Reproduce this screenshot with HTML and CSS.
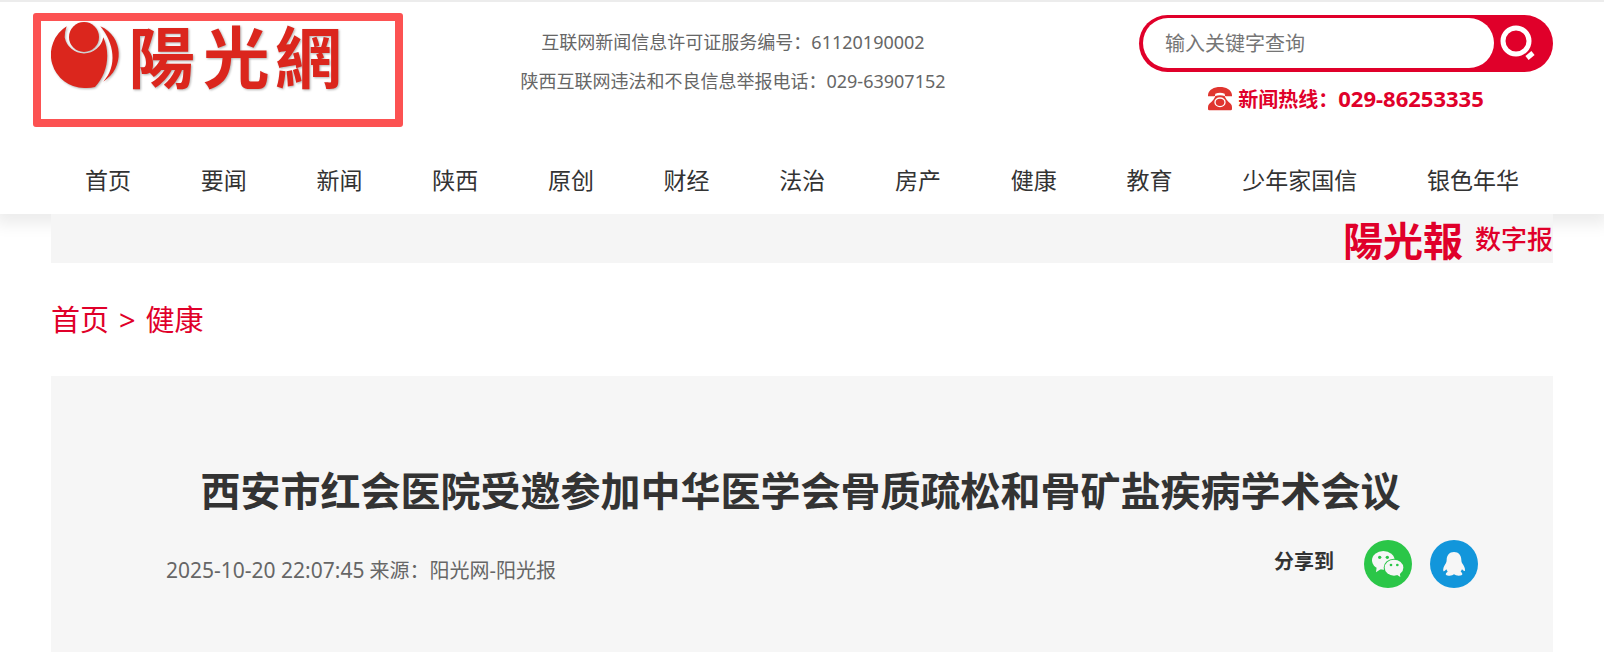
FILE: index.html
```
<!DOCTYPE html>
<html lang="zh-CN">

<head>
    <meta charset="UTF-8">
    <meta name="viewport" content="width=device-width, initial-scale=1">
    <title>西安市红会医院受邀参加中华医学会骨质疏松和骨矿盐疾病学术会议</title>
    <link rel="stylesheet" href="styles.css">
</head>

<body>
    <header class="header">
        <div class="container">
            <div class="header-top">
                <div class="logo">
                    <a href="#" aria-label="阳光网">
                        <svg class="logo-img" viewBox="0 -33 900 360" fill="#db261d">
                            <circle cx="99" cy="72" r="45" />
                            <path d="M47 40 A100 100 0 0 0 100 225 Q118 226 132 222 C168 184 180 124 157 73 A59 59 0 0 1 41 73 Q41 56 47 40 Z" />
                            <path d="M148 40 C218 70 222 166 157 206 C200 160 190 90 148 40 Z" />
                            <g class="logo-text">
                                <text x="232" y="210">陽</text>
                                <text x="456" y="210">光</text>
                                <text x="672" y="210">網</text>
                            </g>
                        </svg>
                    </a>
                    <div class="logo-frame"></div>
                </div>
                <div class="info">
                    <p>互联网新闻信息许可证服务编号：61120190002</p>
                    <p>陕西互联网违法和不良信息举报电话：029-63907152</p>
                </div>
                <div class="search">
                    <form class="search-form">
                        <input class="search-input" type="text" placeholder="输入关键字查询" aria-label="输入关键字查询">
                        <button class="search-btn" type="button" aria-label="搜索">
                            <svg width="36" height="36" viewBox="0 0 36 36" fill="none" stroke="#fff">
                                <circle cx="16" cy="16" r="13" stroke-width="5" />
                                <path d="M27 33 L33 28" stroke-width="5" />
                            </svg>
                        </button>
                    </form>
                    <p class="hotline">
                        <svg width="24" height="24" viewBox="0 0 72 72" fill="#e0352f">
                            <path d="M0 28 C-3 -9 75 -9 72 28 H54 Q50 28 50 20 Q36 15 22 20 Q22 28 18 28 Z" />
                            <path fill-rule="evenodd" d="M22 27 Q36 22 50 27 Q53 38 68 50 Q72 54 72 60 V66 Q72 70 68 70 H4 Q0 70 0 66 V60 Q0 54 4 50 Q19 38 22 27 Z M36 31 A17 15 0 1 0 36 61 A17 15 0 1 0 36 31 Z M36 35 A13 11 0 1 1 36 57 A13 11 0 1 1 36 35 Z" />
                        </svg>
                        <span>新闻热线：<span class="hotline-num">029-86253335</span></span>
                    </p>
                </div>
            </div>
            <nav class="nav">
                <a href="#">首页</a>
                <a href="#">要闻</a>
                <a href="#">新闻</a>
                <a href="#">陕西</a>
                <a href="#">原创</a>
                <a href="#">财经</a>
                <a href="#">法治</a>
                <a href="#">房产</a>
                <a href="#">健康</a>
                <a href="#">教育</a>
                <a href="#">少年家国信</a>
                <a href="#">银色年华</a>
            </nav>
        </div>
    </header>
    <main class="container">
        <div class="banner">
            <a class="paper" href="#">
                <span class="paper-name">陽光報</span>
                <span class="paper-type">数字报</span>
            </a>
        </div>
        <div class="crumb">
            <a href="#">首页</a>
            <span>&gt;</span>
            <a href="#">健康</a>
        </div>
        <article class="article">
            <h1 class="title">西安市红会医院受邀参加中华医学会骨质疏松和骨矿盐疾病学术会议</h1>
            <div class="meta">
                <p class="source"><span class="time">2025-10-20 22:07:45</span> 来源：阳光网-阳光报</p>
                <div class="share">
                    <span class="share-label">分享到</span>
                    <button class="share-btn" type="button" aria-label="微信">
                        <svg viewBox="0 0 144 144">
                            <circle cx="72" cy="72" r="72" fill="#2bc648" />
                            <path d="M38 82 L36 97 L52 86 Z" fill="#f6f6f6" />
                            <ellipse cx="58" cy="61" rx="34" ry="28" fill="#f6f6f6" />
                            <circle cx="47" cy="52" r="5" fill="#2bc648" />
                            <circle cx="70" cy="52" r="5" fill="#2bc648" />
                            <ellipse cx="90" cy="83" rx="31" ry="27" fill="#2bc648" />
                            <ellipse cx="90" cy="83" rx="28" ry="24" fill="#f6f6f6" />
                            <path d="M96 103 L109 111 L107 97 Z" fill="#f6f6f6" />
                            <circle cx="81" cy="75" r="4" fill="#2bc648" />
                            <circle cx="100" cy="75" r="4" fill="#2bc648" />
                        </svg>
                    </button>
                    <button class="share-btn" type="button" aria-label="QQ">
                        <svg viewBox="0 0 144 144">
                            <circle cx="72" cy="72" r="72" fill="#1296db" />
                            <path d="M72 36 C58 36 50 46 50 60 Q50 65 48 69 C42 78 38 86 40 93 Q42 96 49 88 Q51 92 53 95 Q47 98 47 103 Q48 108 59 107 Q68 107 72 103 Q77 107 86 107 Q97 107 97 102 Q97 98 92 95 Q94 92 96 88 Q103 96 105 92 C106 85 102 77 96 69 Q94 65 94 60 C94 46 86 36 72 36 Z" fill="#f6f6f6" />
                        </svg>
                    </button>
                </div>
            </div>
        </article>
    </main>
</body>

</html>
```
FILE: styles.css
```
* {
    box-sizing: border-box;
    margin: 0;
    padding: 0;
}

body {
    font-family: "Noto Sans", "Noto Sans CJK SC", sans-serif;
    font-size: 18px;
    color: #333;
    background: #fff;
}

a {
    color: inherit;
    text-decoration: none;
}

button {
    border: none;
    background: none;
    cursor: pointer;
}

svg {
    display: block;
}

.container {
    max-width: 1502px;
    margin: 0 auto;
}

.header {
    border-top: 2px solid #ececec;
    box-shadow: 0 5px 15px 5px rgba(0, 0, 0, .08);
}

.header-top {
    display: grid;
    grid-template-columns: 276px 1fr 414px;
    height: 144px;
}

/* logo */
.logo {
    position: relative;
}

.logo-img {
    width: 300px;
    height: 120px;
    filter: drop-shadow(1px 1px 1px rgba(0, 0, 0, .3));
}

.logo-text {
    font-family: "Noto Sans CJK TC", sans-serif;
    font-size: 200px;
    font-weight: bold;
}

.logo-frame {
    position: absolute;
    left: -18px;
    top: 11px;
    width: 370px;
    height: 114px;
    border: 8px solid #fc5252;
    border-radius: 3px;
    pointer-events: none;
}

.info {
    padding-top: 21px;
    line-height: 39px;
    color: #666;
    text-align: center;
    white-space: nowrap;
}

/* search */
.search {
    padding-top: 13px;
}

.search-form {
    display: flex;
    height: 57px;
    padding: 3px 0 4px 4px;
    border-radius: 29px;
    background: #e0002a;
}

.search-input {
    flex: 1;
    min-width: 0;
    padding: 0 22px;
    border: none;
    border-radius: 25px;
    outline: none;
    background: #fff;
    font-family: inherit;
    font-size: 20px;
    color: #333;
}

.search-input::placeholder {
    color: #757575;
}

.search-btn {
    width: 59px;
    padding: 0 6px;
}

.hotline {
    display: flex;
    justify-content: center;
    align-items: center;
    gap: 6px;
    margin-top: 11px;
    font-size: 20px;
    line-height: 30px;
    font-weight: bold;
    color: #e0002a;
}

.hotline-num {
    font-size: 22px;
}

.nav {
    display: flex;
    justify-content: space-between;
    padding: 0 34px;
    font-size: 23px;
    line-height: 68px;
    white-space: nowrap;
}

.banner {
    position: relative;
    display: flex;
    justify-content: flex-end;
    height: 49px;
    background: #f5f5f5;
}

.paper {
    display: flex;
    align-items: center;
    gap: 12px;
    line-height: 48px;
    color: #e0002a;
}

.paper-name {
    font-family: "Noto Sans CJK TC", sans-serif;
    font-size: 40px;
    font-weight: bold;
}

.paper-type {
    font-size: 26px;
    font-weight: 500;
}

.crumb {
    display: flex;
    gap: 10px;
    padding: 35px 0 34px;
    font-size: 29px;
    line-height: 44px;
    color: #e0002a;
}

/* article */
.article {
    padding: 85px 75px 80px 115px;
    background: #f6f6f6;
}

.title {
    padding-right: 43px;
    font-size: 40px;
    line-height: 60px;
    text-align: center;
}

.meta {
    display: flex;
    justify-content: space-between;
    margin-top: 19px;
}

.source {
    padding-top: 15px;
    font-size: 20px;
    line-height: 30px;
    color: #666;
}

.time {
    font-size: 21px;
}

.share {
    display: flex;
    align-items: center;
    gap: 18px;
    height: 48px;
}

.share-label {
    margin-right: 12px;
    font-size: 20px;
    line-height: 24px;
    padding-bottom: 4px;
    font-weight: bold;
}

.share-btn {
    width: 48px;
    height: 48px;
}
```
